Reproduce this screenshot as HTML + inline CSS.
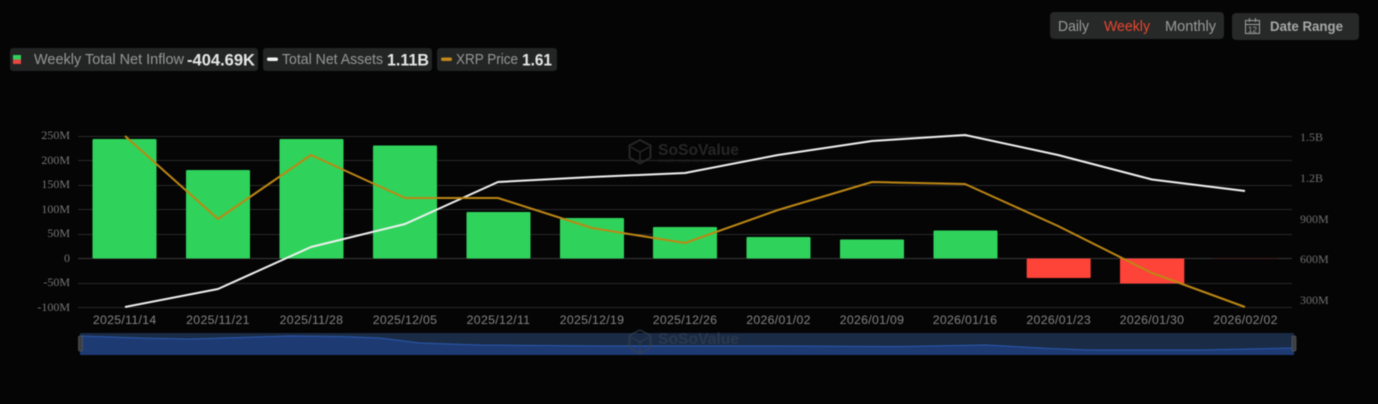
<!DOCTYPE html>
<html><head><meta charset="utf-8">
<style>
html,body{margin:0;padding:0;background:#050506;width:1378px;height:404px;overflow:hidden}
svg{position:absolute;left:0;top:0;filter:blur(.4px)}
.s{font-family:"Liberation Sans",sans-serif}
.f{font-family:"Liberation Serif",serif}
</style></head><body>
<svg width="1378" height="404" viewBox="0 0 1378 404" xmlns="http://www.w3.org/2000/svg">
<!-- top controls -->
<rect x="1050" y="12" width="174" height="27" rx="4" fill="#272828"/>
<rect x="1232" y="13" width="127" height="27" rx="4" fill="#272828"/>
<g class="s" font-size="14.5">
<text x="1058" y="31" fill="#9a9a9a" textLength="31" lengthAdjust="spacingAndGlyphs">Daily</text>
<text x="1104" y="31" fill="#e8472e" textLength="46" lengthAdjust="spacingAndGlyphs">Weekly</text>
<text x="1165" y="31" fill="#9a9a9a" textLength="51" lengthAdjust="spacingAndGlyphs">Monthly</text>
<text x="1270" y="31" fill="#a8a8a8" font-weight="bold" font-size="14" textLength="73" lengthAdjust="spacingAndGlyphs">Date Range</text>
</g>
<g fill="none" stroke="#a0a0a0" stroke-width="1">
<rect x="1245.500" y="20.500" width="14" height="13"/><path d="M1245.500 24.500h14M1249.500 18v4M1255.500 18v4"/>
</g>
<text x="1252.500" y="32.300" class="s" font-size="8" fill="#a0a0a0" text-anchor="middle">12</text>
<!-- legend -->
<rect x="10" y="48" width="248" height="23" rx="3" fill="#232424"/>
<rect x="263" y="48" width="169" height="23" rx="3" fill="#232424"/>
<rect x="437" y="48" width="120" height="23" rx="3" fill="#232424"/>
<rect x="13" y="55" width="8" height="4.500" fill="#2fd15c"/><rect x="13" y="59.500" width="8" height="4.500" fill="#e8473f"/>
<rect x="267" y="57.500" width="11" height="3.500" rx="1.700" fill="#f2f2f2"/>
<rect x="441" y="57.500" width="11" height="3.500" rx="1.700" fill="#c08a1c"/>
<g class="s" font-size="14.500" fill="#979797">
<text x="34" y="64" textLength="150" lengthAdjust="spacingAndGlyphs">Weekly Total Net Inflow</text>
<text x="282" y="64" textLength="101" lengthAdjust="spacingAndGlyphs">Total Net Assets</text>
<text x="456" y="64" textLength="62" lengthAdjust="spacingAndGlyphs">XRP Price</text>
</g>
<g class="s" font-size="16.500" font-weight="bold" fill="#e6e6e6">
<text x="187" y="65.500" textLength="68" lengthAdjust="spacingAndGlyphs">-404.69K</text>
<text x="387" y="65.500" textLength="42" lengthAdjust="spacingAndGlyphs">1.11B</text>
<text x="522" y="65.500" textLength="30" lengthAdjust="spacingAndGlyphs">1.61</text>
</g>
<!-- watermarks -->
<g>
<path d="M640 140l10.500 5.500v12l-10.500 6-10.500-6v-12z" fill="none" stroke="#262626" stroke-width="2"/>
<path d="M631 147l9 5 9-5M640 152v10" fill="none" stroke="#262626" stroke-width="1.500"/>
<text x="658" y="155" class="s" font-size="16" font-weight="bold" fill="#262626" textLength="81" lengthAdjust="spacingAndGlyphs">SoSoValue</text>
<text x="658" y="162.500" class="s" font-size="5" fill="#1d1d1d" textLength="54" lengthAdjust="spacingAndGlyphs">Simplify crypto investing</text>
</g>
<!-- grid -->
<g stroke="#2a2a2b" stroke-width="1">
<path d="M78 136.500H1292M78 160.500H1292M78 185.500H1292M78 209.500H1292M78 234.500H1292M78 283.500H1292M78 307.500H1292"/>
<path d="M78 258.500H1292" stroke="#383838"/>
</g>
<!-- bars -->
<g fill="#2fd35b">
<rect x="92.500" y="139" width="64" height="119.500" rx="1"/>
<rect x="186" y="170" width="64" height="88.500" rx="1"/>
<rect x="279.500" y="139" width="64" height="119.500" rx="1"/>
<rect x="373" y="145.500" width="64" height="113" rx="1"/>
<rect x="466.500" y="212" width="64" height="46.500" rx="1"/>
<rect x="560" y="218" width="64" height="40.500" rx="1"/>
<rect x="653" y="227" width="64" height="31.500" rx="1"/>
<rect x="746.500" y="237" width="64" height="21.500" rx="1"/>
<rect x="840" y="239.500" width="64" height="19" rx="1"/>
<rect x="933.500" y="230.500" width="64" height="28" rx="1"/>
</g>
<g fill="#fe4339">
<rect x="1026.700" y="258.500" width="64" height="19.500" rx="1"/>
<rect x="1120" y="258.500" width="64.300" height="25"/>
</g>
<path d="M1213 258.500H1277" stroke="#4a2523" stroke-width="1"/>
<!-- lines -->
<polyline fill="none" stroke="#f1f1f1" stroke-width="2" stroke-linejoin="round" points="125,307 218,289 311,247 405,224 498,182 592,177 685,173 778,155 872,141 965,135 1058,155 1152,179.500 1245,191"/>
<polyline fill="none" stroke="#bd8714" stroke-width="2" stroke-linejoin="round" points="125,136 218,219 311,155 405,198 498,198 592,228 685,243 778,210 872,182 965,184 1058,226 1152,273 1245,307"/>
<!-- left axis -->
<g class="f" font-size="12" fill="#767676" text-anchor="end">
<text x="70" y="139">250M</text><text x="70" y="164">200M</text><text x="70" y="188">150M</text><text x="70" y="213">100M</text><text x="70" y="237">50M</text><text x="70" y="262">0</text><text x="70" y="286">-50M</text><text x="70" y="311">-100M</text>
</g>
<!-- right axis -->
<g class="f" font-size="12" fill="#707070">
<text x="1300" y="141">1.5B</text><text x="1300" y="182">1.2B</text><text x="1300" y="223">900M</text><text x="1300" y="263">600M</text><text x="1300" y="304">300M</text>
</g>
<!-- x axis -->
<g class="s" font-size="12.300" fill="#858585" text-anchor="middle" letter-spacing=".3">
<text x="124.700" y="324">2025/11/14</text><text x="218" y="324">2025/11/21</text><text x="311.500" y="324">2025/11/28</text><text x="405" y="324">2025/12/05</text><text x="498.500" y="324">2025/12/11</text><text x="592" y="324">2025/12/19</text><text x="685" y="324">2025/12/26</text><text x="778.500" y="324">2026/01/02</text><text x="872" y="324">2026/01/09</text><text x="965" y="324">2026/01/16</text><text x="1058.700" y="324">2026/01/23</text><text x="1152" y="324">2026/01/30</text><text x="1245.500" y="324">2026/02/02</text>
</g>
<!-- data zoom -->
<rect x="80" y="333" width="1214" height="22" fill="#1a2b45"/>
<path d="M80 336L140 338 190 339 290 336 340 336.500 380 338 420 343 480 345 600 346 780 346 900 346.500 985 345 1050 348.500 1090 350 1200 350 1294 348V355H80Z" fill="#1e3a73"/>
<path d="M80 336L140 338 190 339 290 336 340 336.500 380 338 420 343 480 345 600 346 780 346 900 346.500 985 345 1050 348.500 1090 350 1200 350 1294 348" fill="none" stroke="#2a5ab0" stroke-width="1"/>
<rect x="78.500" y="336" width="4" height="15" rx="1.500" fill="#3a3f45" stroke="#5a5a5a" stroke-width=".7"/>
<rect x="1292" y="336" width="4" height="15" rx="1.500" fill="#3a3f45" stroke="#5a5a5a" stroke-width=".7"/>
<g opacity=".55">
<path d="M640 330l10.500 5.500v12l-10.500 6-10.500-6v-12z" fill="none" stroke="#3a4354" stroke-width="2"/>
<path d="M631 337l9 5 9-5M640 342v10" fill="none" stroke="#3a4354" stroke-width="1.500"/>
<text x="658" y="344" class="s" font-size="16" font-weight="bold" fill="#3a4354" textLength="81" lengthAdjust="spacingAndGlyphs">SoSoValue</text>
</g>
</svg>
</body></html>
